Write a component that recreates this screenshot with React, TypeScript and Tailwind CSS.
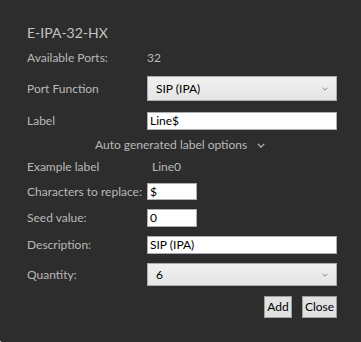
import React from 'react';

function Chevron({ className, strokeWidth = 1.6 }: { className?: string; strokeWidth?: number }) {
  return (
    <svg viewBox="0 0 10 6" className={className} fill="none" stroke="currentColor" strokeWidth={strokeWidth}>
      <path d="M1 1l4 4 4-4" />
    </svg>
  );
}

function SelectBox({ value }: { value: string }) {
  return (
    <div className="w-[190px] h-full flex items-center justify-between pl-[8px] pr-[8px] border border-[#acacac] bg-gradient-to-b from-[#f0f0f0] to-[#e5e5e5] text-black">
      <span>{value}</span>
      <Chevron className="w-[6px] h-[4px] text-[#6e6e6e]" strokeWidth={1.4} />
    </div>
  );
}

function TextBox({ value, width = 'w-[190px]' }: { value: string; width?: string }) {
  return (
    <div className={`${width} h-full flex items-center pl-[2px] border border-[#abadb3] bg-white text-black`}>
      {value}
    </div>
  );
}

export default function App() {
  return (
    <div
      className="w-[361px] h-[342px] bg-[#2d2d2d] rounded-bl-[2px] pl-[27px] pt-[22px] text-[12px] text-[#b9b9b9] flex flex-col"
      style={{ fontFamily: '"Segoe UI", Lato, "Liberation Sans", sans-serif' }}
    >
      <div className="h-[20px] flex items-center text-[14px] text-[#c4c4c4]">E-IPA-32-HX</div>

      <div className="mt-[6px] h-[20px] flex items-center">
        <span className="w-[120px]">Available Ports:</span>
        <span>32</span>
      </div>

      <div className="mt-[8px] h-[25px] flex items-center">
        <span className="w-[120px]">Port Function</span>
        <SelectBox value="SIP (IPA)" />
      </div>

      <div className="mt-[11px] h-[18px] flex items-center">
        <span className="w-[120px]">Label</span>
        <TextBox value="Line$" />
      </div>

      <div className="mt-[7px] h-[16px] flex items-center pl-[68px] gap-[10px]">
        <span>Auto generated label options</span>
        <Chevron className="w-[8px] h-[5px] text-[#b9b9b9]" />
      </div>

      <div className="mt-[5px] h-[18px] flex items-center">
        <span className="w-[125px]">Example label</span>
        <span>Line0</span>
      </div>

      <div className="mt-[7px] h-[17px] flex items-center">
        <span className="w-[120px]">Characters to replace:</span>
        <TextBox value="$" width="w-[50px]" />
      </div>

      <div className="mt-[9px] h-[18px] flex items-center">
        <span className="w-[120px]">Seed value:</span>
        <TextBox value="0" width="w-[50px]" />
      </div>

      <div className="mt-[9px] h-[18px] flex items-center">
        <span className="w-[120px]">Description:</span>
        <TextBox value="SIP (IPA)" />
      </div>

      <div className="mt-[9px] h-[23px] flex items-center">
        <span className="w-[120px]">Quantity:</span>
        <SelectBox value="6" />
      </div>

      <div className="mt-[10px] h-[22px] flex justify-end gap-[10px] w-[310px]">
        <button className="w-[28px] h-full border border-[#a0a0a0] bg-[#e1e1e1] text-black">Add</button>
        <button className="w-[35px] h-full border border-[#a0a0a0] bg-[#e1e1e1] text-black">Close</button>
      </div>
    </div>
  );
}
